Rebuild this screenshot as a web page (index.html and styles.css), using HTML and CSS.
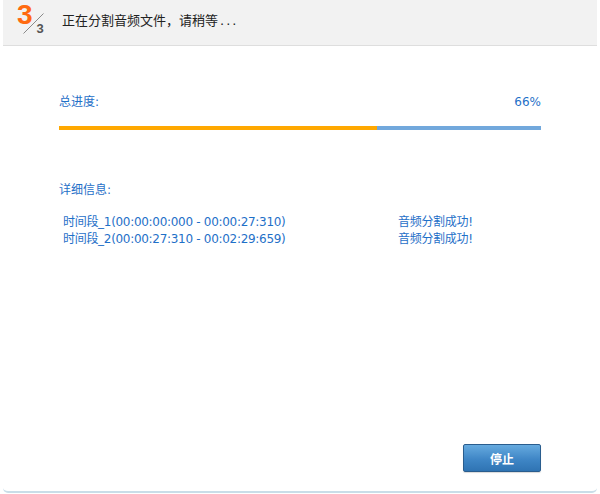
FILE: index.html
```html
<!DOCTYPE html>
<html lang="zh-CN">
<head>
<meta charset="utf-8">
<title>分割音频</title>
<link rel="stylesheet" href="styles.css">
</head>
<body>
<div class="window">
  <div class="header">
    <div class="step">
      <span class="step-big">3</span>
      <svg class="step-slash" width="21" height="21" viewBox="0 0 21 21"><line x1="0.5" y1="20.5" x2="20.5" y2="0.5" stroke="#8a8a8a" stroke-width="1"/></svg>
      <span class="step-small">3</span>
    </div>
    <div class="title">正在分割音频文件，请稍等<span class="dots">...</span></div>
  </div>
  <div class="content">
    <div class="progress-row">
      <span>总进度:</span>
      <span>66%</span>
    </div>
    <div class="bar"><div class="bar-fill" style="width:66%"></div></div>
    <div class="detail-label">详细信息:</div>
    <div class="details">
      <span>时间段_1(00:00:00:000 - 00:00:27:310)</span><span>音频分割成功!</span>
      <span>时间段_2(00:00:27:310 - 00:02:29:659)</span><span>音频分割成功!</span>
    </div>
  </div>
  <div class="footer">
    <button class="btn">停止</button>
  </div>
</div>
</body>
</html>
```
FILE: styles.css
```css
html, body {
  margin: 0;
  padding: 0;
  background: #ffffff;
}
body {
  width: 600px;
  height: 494px;
  overflow: hidden;
  font-family: "DejaVu Sans", "Noto Sans CJK SC", sans-serif;
  font-size: 12px;
}
.window {
  margin: 0 3px;
  height: 491px;
  border-bottom: 2px solid #c9dde8;
  border-radius: 0 0 5px 5px;
  display: flex;
  flex-direction: column;
}
.header {
  height: 45px;
  background: #f2f2f2;
  border-bottom: 1px solid #dedede;
  display: flex;
  align-items: flex-start;
  flex: none;
}
.step {
  width: 59px;
  display: flex;
  align-items: flex-start;
  padding-left: 14px;
  box-sizing: border-box;
}
.step-big {
  font-family: "Liberation Sans", sans-serif;
  font-weight: bold;
  font-size: 28px;
  line-height: 28px;
  color: #ff6a10;
  margin-top: 1px;
}
.step-slash {
  display: block;
  margin-left: -10px;
  margin-top: 13px;
  flex: none;
}
.step-small {
  font-family: "Liberation Sans", sans-serif;
  font-weight: bold;
  font-size: 13px;
  line-height: 13px;
  color: #555555;
  margin-left: -7px;
  margin-top: 22px;
}
.title {
  font-family: "Noto Sans CJK SC", sans-serif;
  font-size: 13px;
  line-height: 16px;
  color: #222222;
  margin-top: 12px;
}
.dots {
  font-family: "DejaVu Sans", sans-serif;
  letter-spacing: 2px;
  margin-left: 2px;
}
.content {
  padding: 0 56px;
  color: #1f70c8;
}
.progress-row {
  display: flex;
  justify-content: space-between;
  line-height: 16px;
  margin-top: 48px;
}
.bar {
  margin-top: 16px;
  height: 4px;
  background: #72a8dc;
  display: flex;
}
.bar-fill {
  background: #ffa800;
  height: 100%;
}
.detail-label {
  margin-top: 52px;
  line-height: 16px;
}
.details {
  margin-top: 16px;
  padding-left: 4px;
  display: grid;
  grid-template-columns: 335px 1fr;
  line-height: 17px;
  letter-spacing: -0.3px;
}
.footer {
  margin-top: auto;
  display: flex;
  justify-content: flex-end;
  padding: 0 56px 19px 0;
}
.btn {
  width: 78px;
  height: 28px;
  border: 1px solid #2a5d8e;
  border-radius: 2px;
  background: linear-gradient(#66aadf, #3f86c6 55%, #2f74b3);
  color: #ffffff;
  font-family: "Noto Sans CJK SC", sans-serif;
  font-weight: bold;
  font-size: 12px;
  padding: 0;
  box-shadow: 0 1px 1px rgba(0,0,0,0.15);
}
```
